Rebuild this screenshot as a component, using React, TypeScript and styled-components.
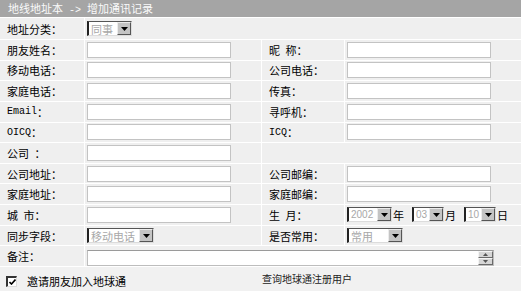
import React from 'react';
import styled, { createGlobalStyle } from 'styled-components';

const Global = createGlobalStyle`
  html, body { margin: 0; padding: 0; background: #fff; }
  body {
    font-family: "Noto Sans CJK SC", "Noto Sans", sans-serif;
    font-size: 11px;
    color: #000;
  }
`;

const Page = styled.div`
  width: 521px;
`;

const Header = styled.div`
  height: 17px;
  margin-bottom: 1px;
  background: #a5a5a5;
  color: #fafafa;
  font-size: 11px;
  line-height: 17px;
  padding-left: 8px;
  white-space: nowrap;
`;

const Arrow = styled.span`
  font-family: "Liberation Mono", monospace;
  font-size: 10px;
  white-space: pre;
`;

const Form = styled.div`
  display: grid;
  grid-template-columns: 84px 176px 82px 176px;
  grid-template-rows: 21px;
  grid-auto-rows: 19.65px;
  gap: 1px;
  background: #fff;
`;

const Label = styled.div`
  background: #efefef;
  display: flex;
  align-items: center;
  padding-left: 7px;
  white-space: pre;
`;

const Mono = styled.span`
  font-family: "Liberation Mono", monospace;
  font-size: 10px;
`;

const Cell = styled.div<{ $span?: number; $bottom?: boolean }>`
  background: #efefef;
  display: flex;
  align-items: ${p => (p.$bottom ? 'flex-end' : 'center')};
  padding-left: 2px;
  grid-column: span ${p => p.$span || 1};
  white-space: nowrap;
`;

const TextInput = styled.input`
  box-sizing: border-box;
  width: 144px;
  height: 16px;
  margin: 0;
  padding: 0 2px;
  border: 1px solid #c3c3c3;
  background: #fff;
  outline: none;
  font: inherit;
`;

const SelectBox = styled.div<{ $w: number }>`
  box-sizing: border-box;
  width: ${p => p.$w}px;
  height: 15px;
  display: flex;
  align-items: center;
  background: #fff;
  border-top: 1px solid #555;
  border-left: 2px solid #222;
  border-right: 1px solid #dcdcdc;
  border-bottom: 1px solid #dcdcdc;
`;

const SelectText = styled.span`
  flex: 1;
  color: #a8a8a8;
  font-size: 11px;
  line-height: 12px;
  padding-left: 2px;
  white-space: nowrap;
`;

const SelectNum = styled(SelectText)`
  font-family: "Liberation Sans", sans-serif;
  font-size: 10px;
`;

const ArrowBtn = styled.span`
  box-sizing: border-box;
  flex: none;
  width: 14px;
  height: 13px;
  align-self: flex-start;
  background: #c4c4c4;
  border-top: 1px solid #ececec;
  border-left: 1px solid #ececec;
  border-right: 1px solid #555;
  border-bottom: 1px solid #555;
  display: flex;
  align-items: center;
  justify-content: center;
`;

const Unit = styled.span`
  margin: 0 8px 0 1px;
`;

const Select: React.FC<{ w: number; text: string; num?: boolean }> = ({ w, text, num }) => (
  <SelectBox $w={w}>
    {num ? <SelectNum>{text}</SelectNum> : <SelectText>{text}</SelectText>}
    <ArrowBtn>
      <svg width="7" height="4" viewBox="0 0 7 4">
        <path d="M0 0h7L3.5 4z" fill="#000" />
      </svg>
    </ArrowBtn>
  </SelectBox>
);

const Memo = styled.div`
  box-sizing: border-box;
  width: 407px;
  height: 16px;
  display: flex;
  justify-content: flex-end;
  background: #fff;
  border: 1px solid #bdbdbd;
  border-top-color: #9a9a9a;
`;

const ScrollCol = styled.div`
  display: flex;
  flex-direction: column;
  width: 15px;
`;

const ScrollBtn = styled.div`
  box-sizing: border-box;
  flex: 1;
  background: #d6d6d6;
  border-top: 1px solid #f4f4f4;
  border-left: 1px solid #f4f4f4;
  border-right: 1px solid #6a6a6a;
  border-bottom: 1px solid #6a6a6a;
  display: flex;
  align-items: center;
  justify-content: center;
`;

const Footer = styled.div`
  display: flex;
  height: 28px;
  margin-top: 1px;
  background: #f1f1f1;
  align-items: center;
`;

const FooterLeft = styled.div`
  width: 262px;
  display: flex;
  align-items: center;
  padding-left: 6px;
  box-sizing: border-box;
`;

const FooterRight = styled.div`
  flex: 1;
  margin-top: -5px;
  color: #222;
  font-size: 10px;
`;

const CheckBox = styled.span`
  box-sizing: border-box;
  width: 11px;
  height: 11px;
  background: #fff;
  border-top: 2px solid #333;
  border-left: 2px solid #333;
  border-right: 1px solid #ddd;
  border-bottom: 1px solid #ddd;
  display: inline-flex;
  align-items: center;
  justify-content: center;
  margin-right: 10px;
`;

const Row2 = ({ l1, l2 }: { l1: React.ReactNode; l2: React.ReactNode }) => (
  <>
    <Label>{l1}</Label>
    <Cell><TextInput /></Cell>
    <Label>{l2}</Label>
    <Cell><TextInput /></Cell>
  </>
);

export default function App() {
  return (
    <Page>
      <Global />
      <Header>地线地址本<Arrow>{' -> '}</Arrow>增加通讯记录</Header>
      <Form>
        <Label>地址分类：</Label>
        <Cell $span={3}><Select w={45} text="同事" /></Cell>

        <Row2 l1="朋友姓名：" l2={'昵\u2002称：'} />
        <Row2 l1="移动电话：" l2="公司电话：" />
        <Row2 l1="家庭电话：" l2="传真：" />
        <Row2 l1={<><Mono>Email</Mono>：</>} l2="寻呼机：" />
        <Row2 l1={<><Mono>OICQ</Mono>：</>} l2={<><Mono>ICQ</Mono>：</>} />

        <Label>{'公司\u2002：'}</Label>
        <Cell><TextInput /></Cell>
        <Cell $span={2} />

        <Row2 l1="公司地址：" l2="公司邮编：" />
        <Row2 l1="家庭地址：" l2="家庭邮编：" />

        <Label>{'城\u2002市：'}</Label>
        <Cell><TextInput /></Cell>
        <Label>{'生\u2002月：'}</Label>
        <Cell>
          <Select w={45} text="2002" num />
          <Unit>年</Unit>
          <Select w={32} text="03" num />
          <Unit>月</Unit>
          <Select w={32} text="10" num />
          <Unit>日</Unit>
        </Cell>

        <Label>同步字段：</Label>
        <Cell><Select w={67} text="移动电话" /></Cell>
        <Label>是否常用：</Label>
        <Cell><Select w={56} text="常用" /></Cell>

        <Label>备注：</Label>
        <Cell $span={3} $bottom>
          <Memo>
            <ScrollCol>
              <ScrollBtn>
                <svg width="5" height="3" viewBox="0 0 5 3"><path d="M0 3h5L2.5 0z" fill="#555" /></svg>
              </ScrollBtn>
              <ScrollBtn>
                <svg width="5" height="3" viewBox="0 0 5 3"><path d="M0 0h5L2.5 3z" fill="#555" /></svg>
              </ScrollBtn>
            </ScrollCol>
          </Memo>
        </Cell>
      </Form>
      <Footer>
        <FooterLeft>
          <CheckBox>
            <svg width="7" height="6" viewBox="0 0 7 6">
              <path d="M0.5 3l2 2L6.5 0.5" stroke="#000" strokeWidth="1.6" fill="none" />
            </svg>
          </CheckBox>
          邀请朋友加入地球通
        </FooterLeft>
        <FooterRight>查询地球通注册用户</FooterRight>
      </Footer>
    </Page>
  );
}
